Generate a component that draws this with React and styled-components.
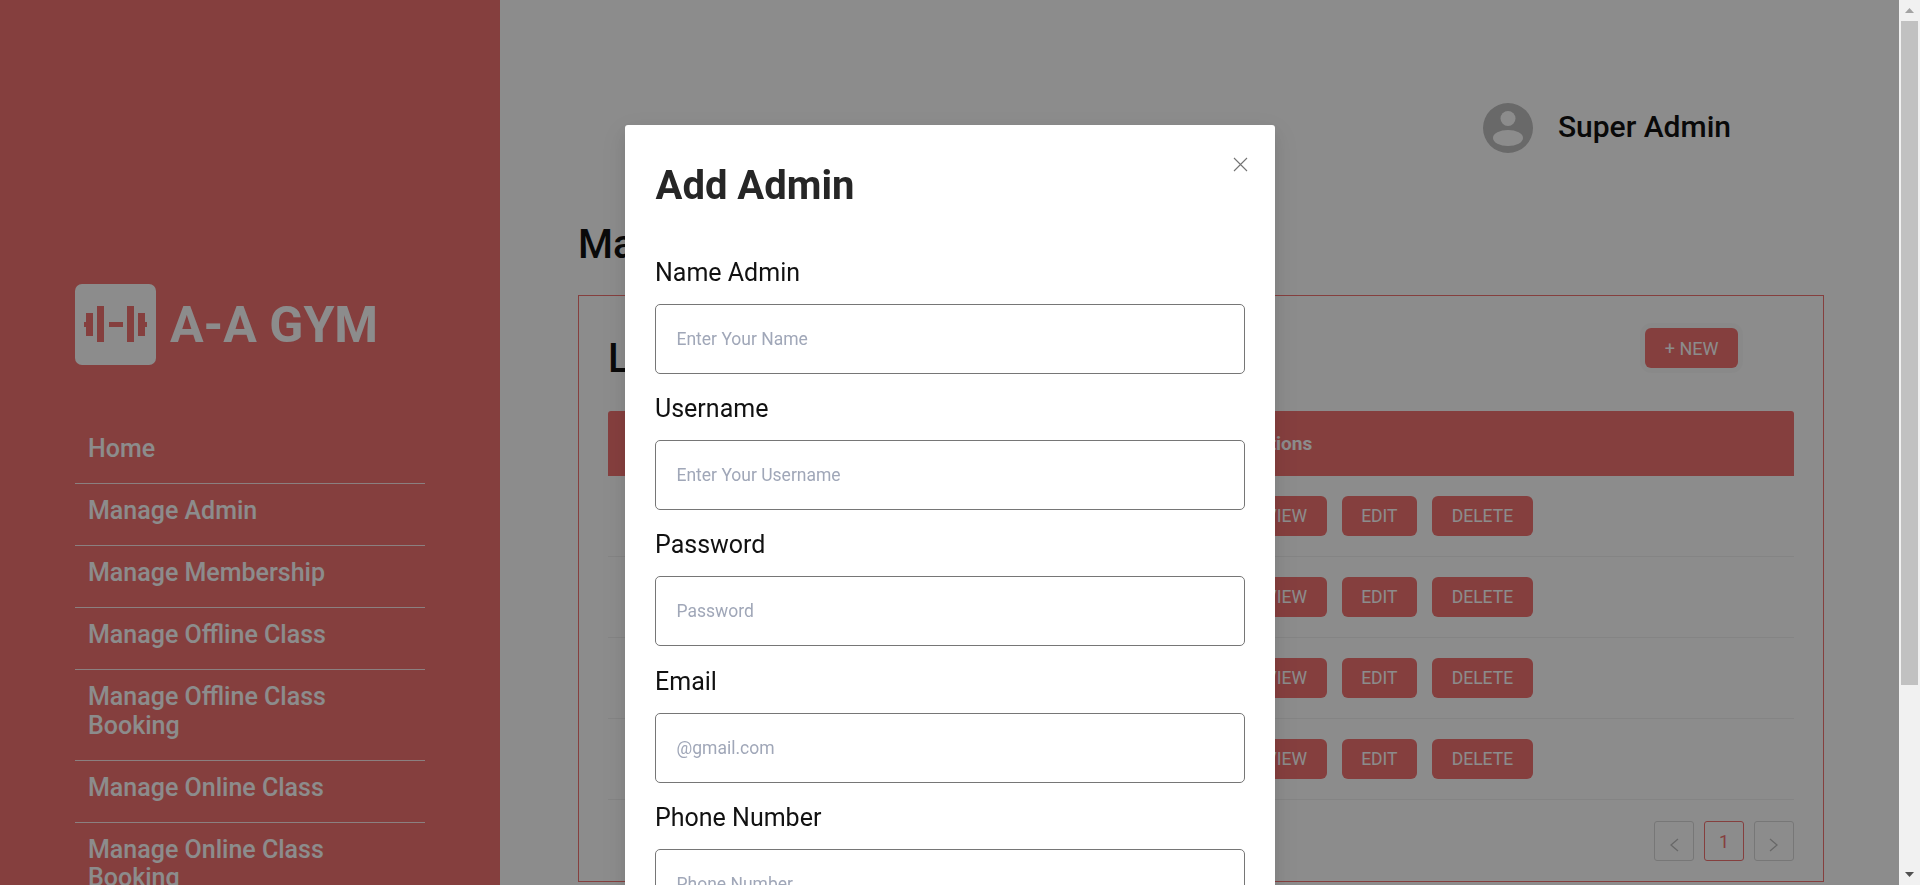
import React from "react";
import styled, { createGlobalStyle } from "styled-components";

const RED = "#f37372";

const GlobalStyle = createGlobalStyle`
  html, body {
    margin: 0;
    padding: 0;
    height: 100%;
    overflow: hidden;
    background: #fff;
    font-family: Roboto, "Liberation Sans", sans-serif;
  }
  * {
    box-sizing: border-box;
  }
`;

const Page = styled.div`
  display: flex;
  height: 100vh;
  padding-right: 21px;
  overflow: hidden;
`;

const Sidebar = styled.aside`
  flex: 0 0 500px;
  background-color: ${RED};
  padding: 284px 75px 0;
  overflow: hidden;
`;

const Brand = styled.div`
  display: flex;
  align-items: center;
  gap: 14px;
  margin-bottom: 57px;
`;

const LogoBox = styled.div`
  width: 81px;
  height: 81px;
  background: #fff;
  border-radius: 7px;
  display: flex;
  align-items: center;
  justify-content: center;
`;

const BrandName = styled.span`
  padding-top: 1px;
  color: #fff;
  font-size: 50px;
  font-weight: 700;
  white-space: nowrap;
`;

const NavList = styled.nav`
  display: flex;
  flex-direction: column;
`;

const NavItem = styled.a`
  display: block;
  padding: 13px 13px 19.5px;
  color: #fff;
  font-size: 25px;
  line-height: 28.5px;
  font-weight: 500;
  border-bottom: 1px solid rgba(255, 255, 255, 0.85);
`;

const Main = styled.main`
  flex: 1;
  min-width: 0;
  padding: 103px 75px 0 78px;
`;

const TopBar = styled.header`
  display: flex;
  justify-content: flex-end;
  align-items: center;
  gap: 25px;
  padding-right: 93px;
  height: 50px;
  margin-bottom: 68px;
`;

const UserName = styled.span`
  padding-bottom: 3px;
  font-size: 30px;
  font-weight: 500;
  color: #111;
`;

const PageTitle = styled.h1`
  margin: 0 0 27px;
  font-size: 40px;
  font-weight: 500;
  color: #111;
`;

const Card = styled.section`
  border: 1px solid ${RED};
  padding: 32px 29px 20px;
`;

const CardHead = styled.div`
  display: flex;
  justify-content: space-between;
  align-items: flex-start;
  padding-right: 56px;
  margin-bottom: 29px;
`;

const CardTitle = styled.h2`
  margin: 7px 0 0;
  font-size: 40px;
  font-weight: 500;
  color: #111;
`;

const RedButton = styled.button`
  height: 40px;
  padding: 0 19.5px;
  border: none;
  border-radius: 6px;
  background: ${RED};
  color: #fff;
  font-family: inherit;
  font-size: 18px;
  box-shadow: 0 0 0 5px rgba(0, 0, 0, 0.02);
`;

const TableHead = styled.div`
  display: grid;
  grid-template-columns: 622px 1fr;
  align-items: center;
  height: 65px;
  background: ${RED};
  border-radius: 3px 3px 0 0;
  color: #fff;
  font-size: 19px;
  font-weight: 700;
`;

const ActionsHead = styled.span`
  grid-column: 2;
  padding-left: 17px;
  padding-bottom: 1px;
`;

const TableRow = styled.div`
  display: grid;
  grid-template-columns: 622px 1fr;
  height: 81px;
  padding-top: 20px;
  border-bottom: 1px solid #f0f0f0;
`;

const Actions = styled.div`
  grid-column: 2;
  display: flex;
  gap: 15px;
  padding-left: 16px;
`;

const ActionButton = styled.button`
  height: 40px;
  padding: 0 19.6px;
  border: none;
  border-radius: 6px;
  background: ${RED};
  color: #fff;
  font-family: inherit;
  font-size: 17.5px;
`;

const Pager = styled.div`
  display: flex;
  justify-content: flex-end;
  gap: 10px;
  margin-top: 21px;
`;

const PageBox = styled.div`
  width: 40px;
  height: 40px;
  display: flex;
  align-items: center;
  justify-content: center;
  border: 1px solid ${(p) => (p.$active ? RED : "#d9d9d9")};
  border-radius: 3px;
  color: ${RED};
  font-size: 18px;
`;

const Mask = styled.div`
  position: fixed;
  inset: 0;
  background: rgba(0, 0, 0, 0.45);
`;

const ModalWrap = styled.div`
  position: fixed;
  inset: 0 21px 0 0;
  overflow: hidden;
`;

const Modal = styled.div`
  position: relative;
  width: 650px;
  margin: 125px auto 24px;
  padding: 37px 30px 30px;
  background: #fff;
  border-radius: 3px;
  box-shadow: 0 6px 16px rgba(0, 0, 0, 0.08), 0 3px 6px -4px rgba(0, 0, 0, 0.12),
    0 9px 28px 8px rgba(0, 0, 0, 0.05);
`;

const CloseButton = styled.button`
  position: absolute;
  top: 32px;
  right: 27px;
  width: 15px;
  height: 15px;
  padding: 0;
  border: none;
  background: none;
  display: flex;
`;

const ModalTitle = styled.h2`
  margin: 0 0 48.6px 1px;
  font-size: 40px;
  font-weight: 700;
  color: #262626;
`;

const FieldLabel = styled.label`
  display: block;
  margin: 0 0 17.1px 0.5px;
  font-size: 25px;
  color: #111;
`;

const TextInput = styled.input`
  display: block;
  width: 100%;
  height: 70px;
  margin-bottom: 20.3px;
  padding: 0 21px;
  border: 1px solid #767676;
  border-radius: 5px;
  outline: none;
  font-family: inherit;
  font-size: 17.5px;

  &::placeholder {
    color: #a0a7b8;
  }
`;

const ScrollRail = styled.div`
  position: fixed;
  top: 0;
  right: 0;
  bottom: 0;
  width: 21px;
  display: flex;
  flex-direction: column;
  justify-content: space-between;
  background: #f1f1f1;
`;

const ScrollThumb = styled.div`
  flex: 0 0 664px;
  margin: 0 2px;
  background: #c1c1c1;
`;

const ScrollTop = styled.div`
  display: flex;
  flex-direction: column;
`;

const ArrowCell = styled.div`
  flex: 0 0 21px;
  height: 21px;
  display: flex;
  align-items: center;
  justify-content: center;
`;

const menu = [
  "Home",
  "Manage Admin",
  "Manage Membership",
  "Manage Offline Class",
  "Manage Offline Class Booking",
  "Manage Online Class",
  "Manage Online Class Booking",
];

const fields = [
  { label: "Name Admin", placeholder: "Enter Your Name" },
  { label: "Username", placeholder: "Enter Your Username" },
  { label: "Password", placeholder: "Password", type: "password" },
  { label: "Email", placeholder: "@gmail.com" },
  { label: "Phone Number", placeholder: "Phone Number" },
];

const Dumbbell = () => (
  <svg width="81" height="81" viewBox="0 0 81 81" fill={RED}>
    <rect x="9" y="38" width="3" height="5" />
    <rect x="11" y="29" width="7" height="23" />
    <rect x="22" y="22" width="7" height="36" />
    <rect x="34" y="38" width="14" height="5" />
    <rect x="52" y="22" width="7" height="36" />
    <rect x="63" y="29" width="7" height="23" />
    <rect x="69" y="38" width="3" height="5" />
  </svg>
);

const Avatar = () => (
  <svg width="50" height="50" viewBox="0 0 50 50">
    <circle cx="25" cy="25" r="25" fill="#bfbfbf" />
    <circle cx="25" cy="15.5" r="7.5" fill="#fff" />
    <ellipse cx="25" cy="35" rx="15" ry="8" fill="#fff" />
  </svg>
);

const CloseIcon = () => (
  <svg width="15" height="15" viewBox="0 0 15 15" fill="none" stroke="#737373" strokeWidth="1.1">
    <path d="M1 1l13 13M14 1L1 14" />
  </svg>
);

const Chevron = ({ dir }) => (
  <svg width="10" height="14" viewBox="0 0 10 14" fill="none" stroke="#bdbdbd" strokeWidth="1.3" style={{ marginTop: 7 }}>
    <path d={dir === "left" ? "M9 1L2 7l7 6" : "M1 1l7 6-7 6"} />
  </svg>
);

const ScrollArrow = ({ up }) => (
  <svg width="9" height="5" viewBox="0 0 9 5" fill={up ? "#a3a3a3" : "#505050"}>
    <path d={up ? "M0 5h9L4.5 0z" : "M0 0h9L4.5 5z"} />
  </svg>
);

export default function App() {
  return (
    <>
      <GlobalStyle />
      <Page>
        <Sidebar>
          <Brand>
            <LogoBox>
              <Dumbbell />
            </LogoBox>
            <BrandName>A-A GYM</BrandName>
          </Brand>
          <NavList>
            {menu.map((item) => (
              <NavItem key={item}>{item}</NavItem>
            ))}
          </NavList>
        </Sidebar>
        <Main>
          <TopBar>
            <Avatar />
            <UserName>Super Admin</UserName>
          </TopBar>
          <PageTitle>Manage Admin</PageTitle>
          <Card>
            <CardHead>
              <CardTitle>List Admin</CardTitle>
              <RedButton>+ NEW</RedButton>
            </CardHead>
            <TableHead>
              <ActionsHead>Actions</ActionsHead>
            </TableHead>
            {[0, 1, 2, 3].map((row) => (
              <TableRow key={row}>
                <Actions>
                  <ActionButton>VIEW</ActionButton>
                  <ActionButton>EDIT</ActionButton>
                  <ActionButton>DELETE</ActionButton>
                </Actions>
              </TableRow>
            ))}
            <Pager>
              <PageBox>
                <Chevron dir="left" />
              </PageBox>
              <PageBox $active>1</PageBox>
              <PageBox>
                <Chevron dir="right" />
              </PageBox>
            </Pager>
          </Card>
        </Main>
      </Page>
      <Mask />
      <ModalWrap>
        <Modal>
          <CloseButton aria-label="Close">
            <CloseIcon />
          </CloseButton>
          <ModalTitle>Add Admin</ModalTitle>
          {fields.map((field) => (
            <div key={field.label}>
              <FieldLabel>{field.label}</FieldLabel>
              <TextInput type={field.type || "text"} placeholder={field.placeholder} />
            </div>
          ))}
        </Modal>
      </ModalWrap>
      <ScrollRail>
        <ScrollTop>
          <ArrowCell>
            <ScrollArrow up />
          </ArrowCell>
          <ScrollThumb />
        </ScrollTop>
        <ArrowCell>
          <ScrollArrow />
        </ArrowCell>
      </ScrollRail>
    </>
  );
}
